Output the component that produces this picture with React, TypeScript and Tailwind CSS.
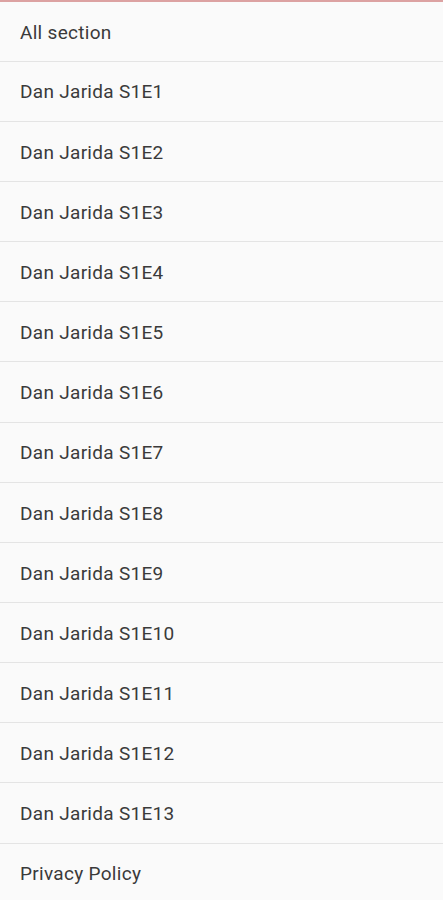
import React from 'react';

const items = [
  'All section',
  ...Array.from({ length: 13 }, (_, i) => `Dan Jarida S1E${i + 1}`),
  'Privacy Policy',
];

export default function App() {
  return (
    <div className="w-[443px] h-[900px] overflow-hidden bg-[#fafafa] border-t-2 border-[#dca2a2] font-['Roboto',sans-serif]">
      {items.map((label) => (
        <div
          key={label}
          className="h-[60.17px] flex items-center pl-5 pt-[3px] border-b border-[#e4e4e4] text-[19px] tracking-[0.3px] text-[#3a3a3a] first:h-[59.6px]"
        >
          {label}
        </div>
      ))}
    </div>
  );
}
